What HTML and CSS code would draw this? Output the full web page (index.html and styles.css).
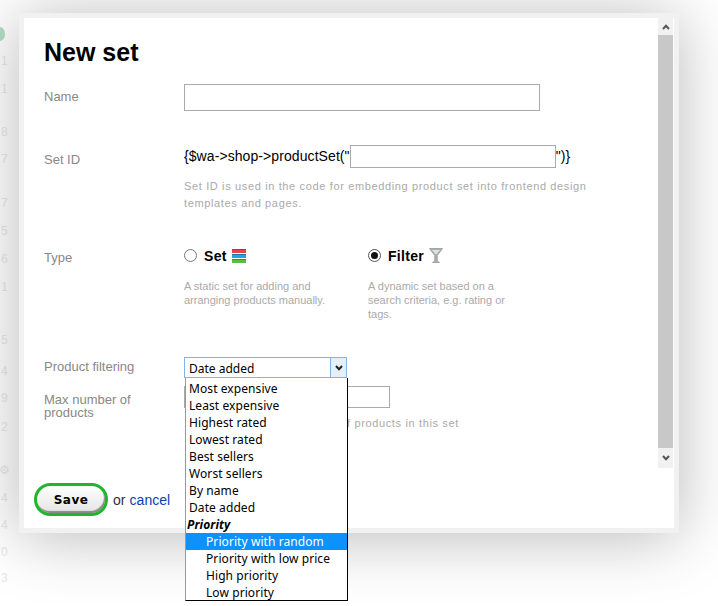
FILE: index.html
```html
<!DOCTYPE html>
<html lang="en">
<head>
<meta charset="utf-8">
<title>New set</title>
<link rel="stylesheet" href="styles.css">
</head>
<body>
<div class="page">
  <aside class="ghost">
    <span class="ghost-dot"></span>
    <span class="d d1">1</span><span class="d d2">1</span><span class="d d3">8</span><span class="d d4">7</span><span class="d d5">7</span><span class="d d6">5</span><span class="d d7">6</span><span class="d d8">1</span><span class="d d9">5</span><span class="d d10">4</span><span class="d d11">9</span><span class="d d12">2</span><span class="d d-gear">⚙</span><span class="d d13">4</span><span class="d d14">4</span><span class="d d15">0</span><span class="d d16">3</span>
  </aside>
  <main class="dialog">
    <div class="body">
      <h1 class="title">New set</h1>
      <div class="row row-name">
        <div class="label">Name</div>
        <div class="field"><input class="input input-name" type="text"></div>
      </div>
      <div class="row row-id">
        <div class="label label-id">Set ID</div>
        <div class="field">
          <div class="code">{$wa-&gt;shop-&gt;productSet("<input class="input input-id" type="text">")}</div>
          <p class="hint hint-wide">Set ID is used in the code for embedding product set into frontend design templates and pages.</p>
        </div>
      </div>
      <div class="row row-type">
        <div class="label label-type">Type</div>
        <div class="field types">
          <div class="type type-set">
            <div class="choice">
              <span class="radio"></span><b class="choice-name">Set</b>
              <svg class="icon" viewBox="0 0 14 14" width="14" height="14" aria-hidden="true">
                <rect x="0" y="0" width="14" height="4" fill="#e8414f"/><rect x="0" y="0" width="14" height="1" fill="#b9303c"/>
                <rect x="0" y="5" width="14" height="4" fill="#1fa6dc"/><rect x="0" y="5" width="14" height="1" fill="#1578a8"/>
                <rect x="0" y="10" width="14" height="4" fill="#5dbb3f"/><rect x="0" y="10" width="14" height="1" fill="#3c8f28"/>
              </svg>
            </div>
            <p class="hint">A static set for adding and arranging products manually.</p>
          </div>
          <div class="type type-filter">
            <div class="choice">
              <span class="radio radio-on"></span><b class="choice-name">Filter</b>
              <svg class="icon" viewBox="0 0 14 15" width="14" height="15" aria-hidden="true">
                <path d="M0.5 0.5H13.5L8.2 7.5V13L10.5 14.5H3.5L5.8 13V7.5Z" fill="#a9aeae" stroke="#a0a5a5" stroke-width="1"/>
                <path d="M3 2H11L7.6 6H6.4Z" fill="#dfe2e2"/>
              </svg>
            </div>
            <p class="hint">A dynamic set based on a search criteria, e.g. rating or tags.</p>
          </div>
        </div>
      </div>
      <div class="row row-filtering">
        <div class="label">Product filtering</div>
        <div class="field">
          <div class="select"><span class="select-value">Date added</span><span class="select-btn"><svg viewBox="0 0 8 6" width="8" height="6" aria-hidden="true"><path d="M1 1L4 4.2L7 1" fill="none" stroke="#222" stroke-width="2"/></svg></span></div>
        </div>
      </div>
      <div class="row row-max">
        <div class="label label-max">Max number of products</div>
        <div class="field">
          <input class="input input-max" type="text">
          <p class="hint hint-wide hint-max">f products in this set</p>
        </div>
      </div>
      <ul class="menu">
        <li>Most expensive</li><li>Least expensive</li><li>Highest rated</li><li>Lowest rated</li><li>Best sellers</li><li>Worst sellers</li><li>By name</li><li>Date added</li>
        <li class="group">Priority</li>
        <li class="sub active">Priority with random</li><li class="sub">Priority with low price</li><li class="sub">High priority</li><li class="sub">Low priority</li>
      </ul>
      <div class="actions">
        <button class="save" type="button">Save</button>
        <span class="or">or <a class="cancel" href="#">cancel</a></span>
      </div>
    </div>
    <div class="scrollbar">
      <span class="arrow"><svg viewBox="0 0 8 6" width="8" height="6" aria-hidden="true"><path d="M1 5L4 1.8L7 5" fill="none" stroke="#555" stroke-width="2"/></svg></span>
      <span class="thumb"></span>
      <span class="arrow arrow-down"><svg viewBox="0 0 8 6" width="8" height="6" aria-hidden="true"><path d="M1 1L4 4.2L7 1" fill="none" stroke="#555" stroke-width="2"/></svg></span>
    </div>
  </main>
</div>
</body>
</html>
```
FILE: styles.css
```css
* { box-sizing: border-box; }
html, body { margin: 0; padding: 0; background: #fff; }
body { width: 718px; height: 606px; overflow: hidden; font-family: "Liberation Sans", Arial, sans-serif; }
.page { display: flex; align-items: flex-start; height: 606px; padding-top: 13px; }

.ghost { width: 19px; height: 593px; display: flex; flex-direction: column; align-items: flex-start; font-size: 12px; line-height: 14px; color: #e9e9e9; }
.ghost-dot { width: 10px; height: 14px; margin: 14px 0 0 -5px; border-radius: 50%; background: #b4dfc3; }
.d { display: block; padding-left: 1px; }
.d1 { margin-top: 13px; }
.d2 { margin-top: 14px; }
.d3 { margin-top: 29px; }
.d4 { margin-top: 13px; }
.d5 { margin-top: 30px; }
.d6 { margin-top: 14px; }
.d7 { margin-top: 14px; }
.d8 { margin-top: 14px; }
.d9 { margin-top: 39px; }
.d10 { margin-top: 17px; }
.d11 { margin-top: 13px; }
.d12 { margin-top: 15px; }
.d-gear { margin-top: 29px; margin-left: -2px; }
.d13 { margin-top: 14px; }
.d14 { margin-top: 13px; }
.d15 { margin-top: 13px; }
.d16 { margin-top: 12px; }

.dialog { position: relative; z-index: 1; flex: none; display: flex; width: 660px; height: 520px; border: 5px solid #f1f1f1; background: #fff; box-shadow: 0 4px 60px rgba(0, 0, 0, .28); }
.body { position: relative; flex: 1; min-width: 0; padding: 0 0 0 20px; }
.title { margin: 19px 0 0; font-size: 25px; line-height: 30px; font-weight: bold; color: #000; }

.row { display: flex; }
.label { width: 140px; flex: none; font-size: 13px; line-height: 16px; color: #888; }
.field { flex: 1; min-width: 0; }
.input { display: block; margin: 0; padding: 0; border: 1px solid #aaa; background: #fff; border-radius: 0; outline: none; }

.row-name { margin-top: 17px; }
.row-name .label { padding-top: 5px; }
.input-name { width: 356px; height: 27px; }

.row-id { margin-top: 34px; }
.label-id { padding-top: 7px; }
.code { display: flex; align-items: flex-start; height: 23px; font-size: 14px; line-height: 22px; letter-spacing: .08px; color: #000; }
.code .input { width: 206px; height: 23px; }
.hint { margin: 0; font-size: 11px; line-height: 14px; color: #aaa; }
.hint-wide { letter-spacing: .64px; line-height: 17px; width: 410px; }
.row-id .hint { margin-top: 10px; }

.row-type { margin-top: 36px; }
.label-type { padding-top: 2px; }
.types { display: flex; }
.type-set { width: 184px; }
.type-filter { width: 150px; }
.choice { display: flex; align-items: center; height: 15px; }
.radio { width: 13px; height: 13px; flex: none; border: 1px solid #777; border-radius: 50%; background: #fff; }
.radio-on { position: relative; border-color: #555; }
.radio-on::after { content: ""; position: absolute; left: 2px; top: 2px; width: 7px; height: 7px; border-radius: 50%; background: #111; }
.choice-name { margin: 0 5px 0 7px; font-size: 14px; letter-spacing: .3px; color: #000; }
.type .hint { margin-top: 16px; width: 145px; }

.row-filtering { margin-top: 36px; }
.row-filtering .label { padding-top: 2px; }
.select { display: flex; width: 163px; height: 21px; border: 1px solid #7eb4ea; background: #fff; font-family: "Noto Sans", sans-serif; font-size: 12px; color: #000; }
.select-value { flex: 1; padding: 1px 0 0 4px; line-height: 19px; }
.select-btn { width: 16px; display: flex; align-items: center; justify-content: center; border-left: 1px solid #7eb4ea; background: #e6eef7; }

.row-max { margin-top: 8px; }
.label-max { width: 100px; margin-right: 40px; padding-top: 7px; line-height: 13px; }
.input-max { width: 206px; height: 22px; }
.hint-max { margin-top: 7px; padding-left: 163px; white-space: nowrap; }

.menu { position: absolute; left: 161px; top: 360px; z-index: 2; width: 163px; height: 223px; margin: 0; padding: 2px 0 0; list-style: none; background: #fff; border: 1px solid #000; border-left-color: #999; border-top: 0; font-family: "Noto Sans", sans-serif; font-size: 12px; letter-spacing: .08px; color: #000; }
.menu li { height: 17px; line-height: 17px; padding-left: 3px; white-space: nowrap; }
.menu .group { padding-left: 1px; font-weight: bold; font-style: italic; }
.menu .sub { padding-left: 20px; }
.menu .active { background: #0f91fb; color: #fff; }

.actions { position: absolute; left: 10px; bottom: 12px; display: flex; align-items: center; }
.save { width: 74px; height: 33px; padding: 0; border: 3px solid #1fb52c; border-radius: 17px; background: linear-gradient(#fff, #e4e4e4); box-shadow: inset -1px -2px 1px #888; font-family: "DejaVu Sans", sans-serif; font-size: 12px; font-weight: bold; letter-spacing: .5px; color: #000; }
.or { margin-left: 5px; font-size: 14px; letter-spacing: .05px; color: #333; }
.cancel { color: #0a3fb0; text-decoration: none; }

.scrollbar { flex: none; width: 15px; margin-right: 1px; height: 450px; display: flex; flex-direction: column; background: #f1f1f1; }
.arrow { height: 17px; flex: none; display: flex; align-items: center; justify-content: center; }
.arrow-down { height: 20px; }
.thumb { flex: 1; background: #c8c8c8; }
```
